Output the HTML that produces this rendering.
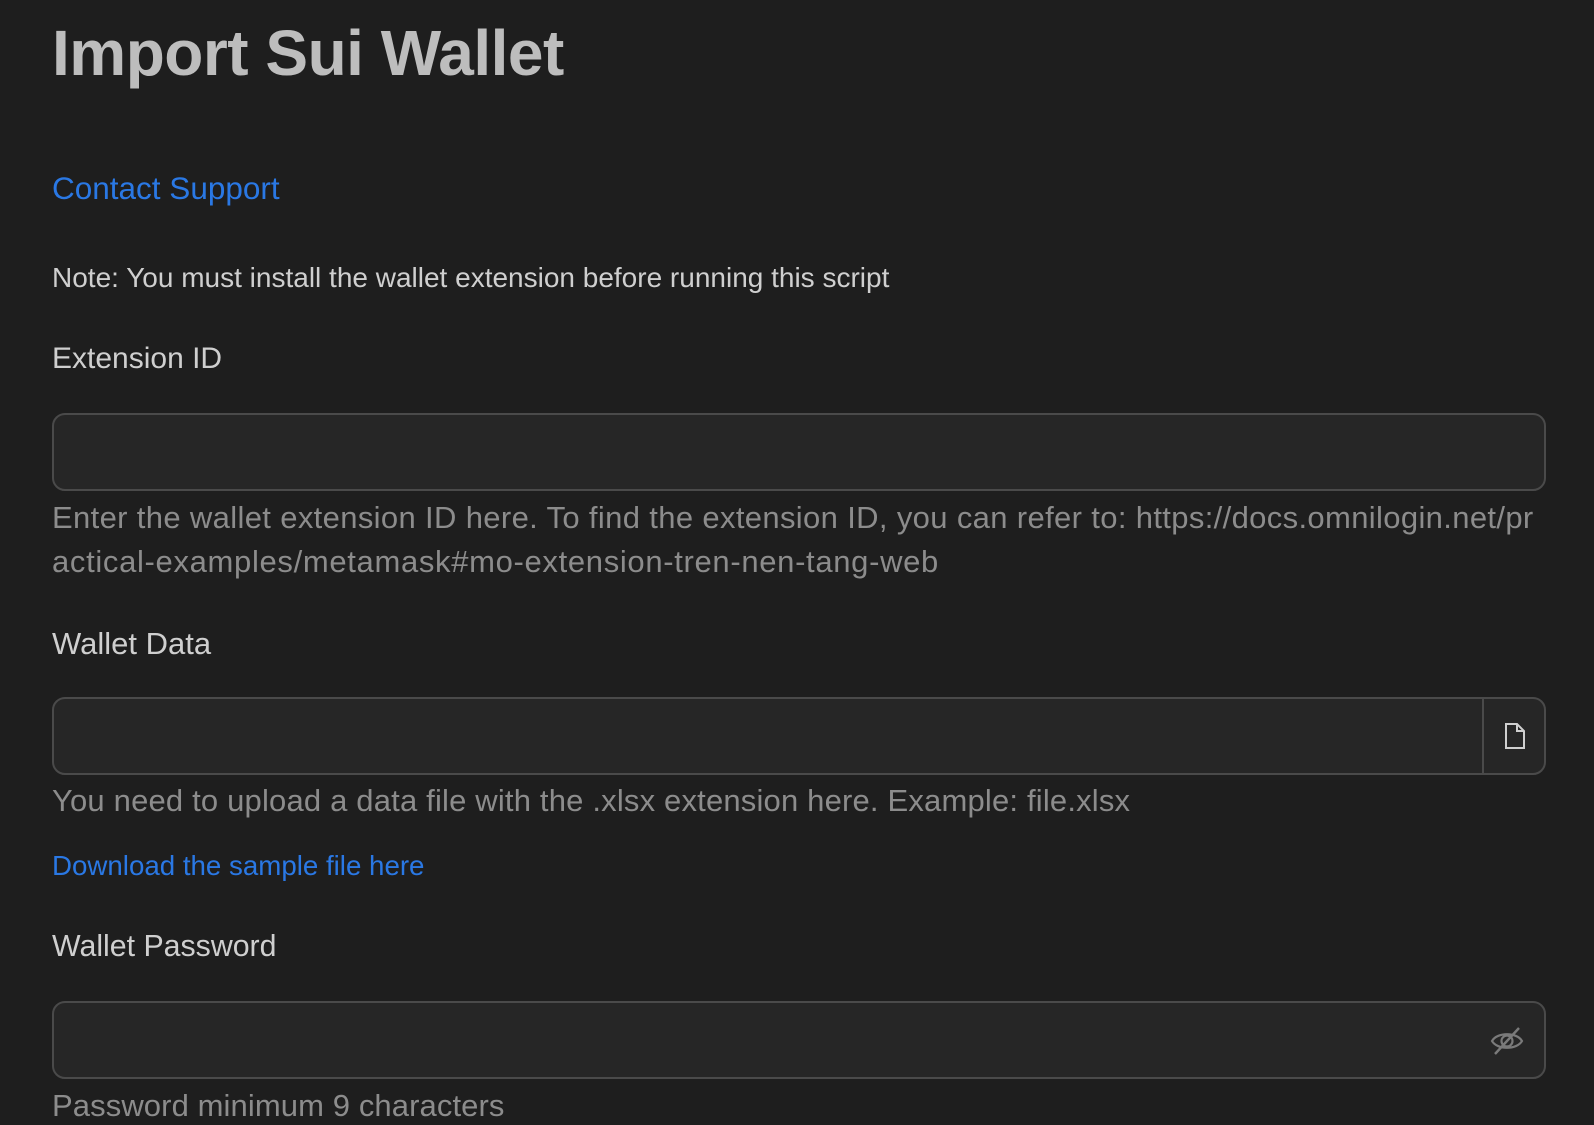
<!DOCTYPE html>
<html><head><meta charset="utf-8"><style>
body{margin:0;background:#1e1e1e;width:1594px;height:1125px;overflow:hidden;font-family:"Liberation Sans",sans-serif;position:relative}
.t{position:absolute;left:52px;white-space:nowrap;line-height:1}
.in{position:absolute;left:52px;width:1494px;height:78px;background:#262626;border:2px solid #4a4a4a;border-radius:13px;box-sizing:border-box}
.h{font-size:31px;color:#8c8c8c}
</style></head><body>
<div class="t" style="top:21px;font-size:64px;font-weight:bold;color:#bdbdbd;letter-spacing:-0.5px">Import Sui Wallet</div>
<div class="t" style="top:173px;font-size:31.5px;color:#2a78e4">Contact Support</div>
<div class="t" style="top:264px;font-size:28px;color:#cfcfcf">Note: You must install the wallet extension before running this script</div>
<div class="t" style="top:344px;font-size:30px;color:#cfcfcf">Extension ID</div>
<div class="in" style="top:413px"></div>
<div class="t h" style="top:502px;letter-spacing:0.35px">Enter the wallet extension ID here. To find the extension ID, you can refer to: https://docs.omnilogin.net/pr</div>
<div class="t h" style="top:546px;letter-spacing:0.67px">actical-examples/metamask#mo-extension-tren-nen-tang-web</div>
<div class="t" style="top:628px;font-size:31px;color:#cfcfcf">Wallet Data</div>
<div class="in" style="top:697px"></div>
<div style="position:absolute;left:1482px;top:697px;width:2px;height:78px;background:#4a4a4a"></div>
<svg style="position:absolute;left:1503px;top:722px" width="24" height="28" viewBox="0 0 24 28"><path d="M3 2H14L21 9V26H3Z M14 2V9H21" fill="none" stroke="#cfcfcf" stroke-width="2"/></svg>
<div class="t h" style="top:785px;letter-spacing:0.18px">You need to upload a data file with the .xlsx extension here. Example: file.xlsx</div>
<div class="t" style="top:852px;font-size:27.7px;color:#2a78e4">Download the sample file here</div>
<div class="t" style="top:932px;font-size:30.3px;color:#cfcfcf">Wallet Password</div>
<div class="in" style="top:1001px"></div>
<svg style="position:absolute;left:1490px;top:1026px" width="34" height="30" viewBox="0 0 34 30"><path d="M2 15C7 6 27 6 32 15C27 24 7 24 2 15Z" fill="none" stroke="#7a7a7a" stroke-width="2.2"/><circle cx="17" cy="15" r="5.5" fill="none" stroke="#7a7a7a" stroke-width="2.2"/><path d="M5 28L29 2" stroke="#7a7a7a" stroke-width="2.4"/></svg>
<div class="t h" style="top:1090px;letter-spacing:0.1px">Password minimum 9 characters</div>
</body></html>
